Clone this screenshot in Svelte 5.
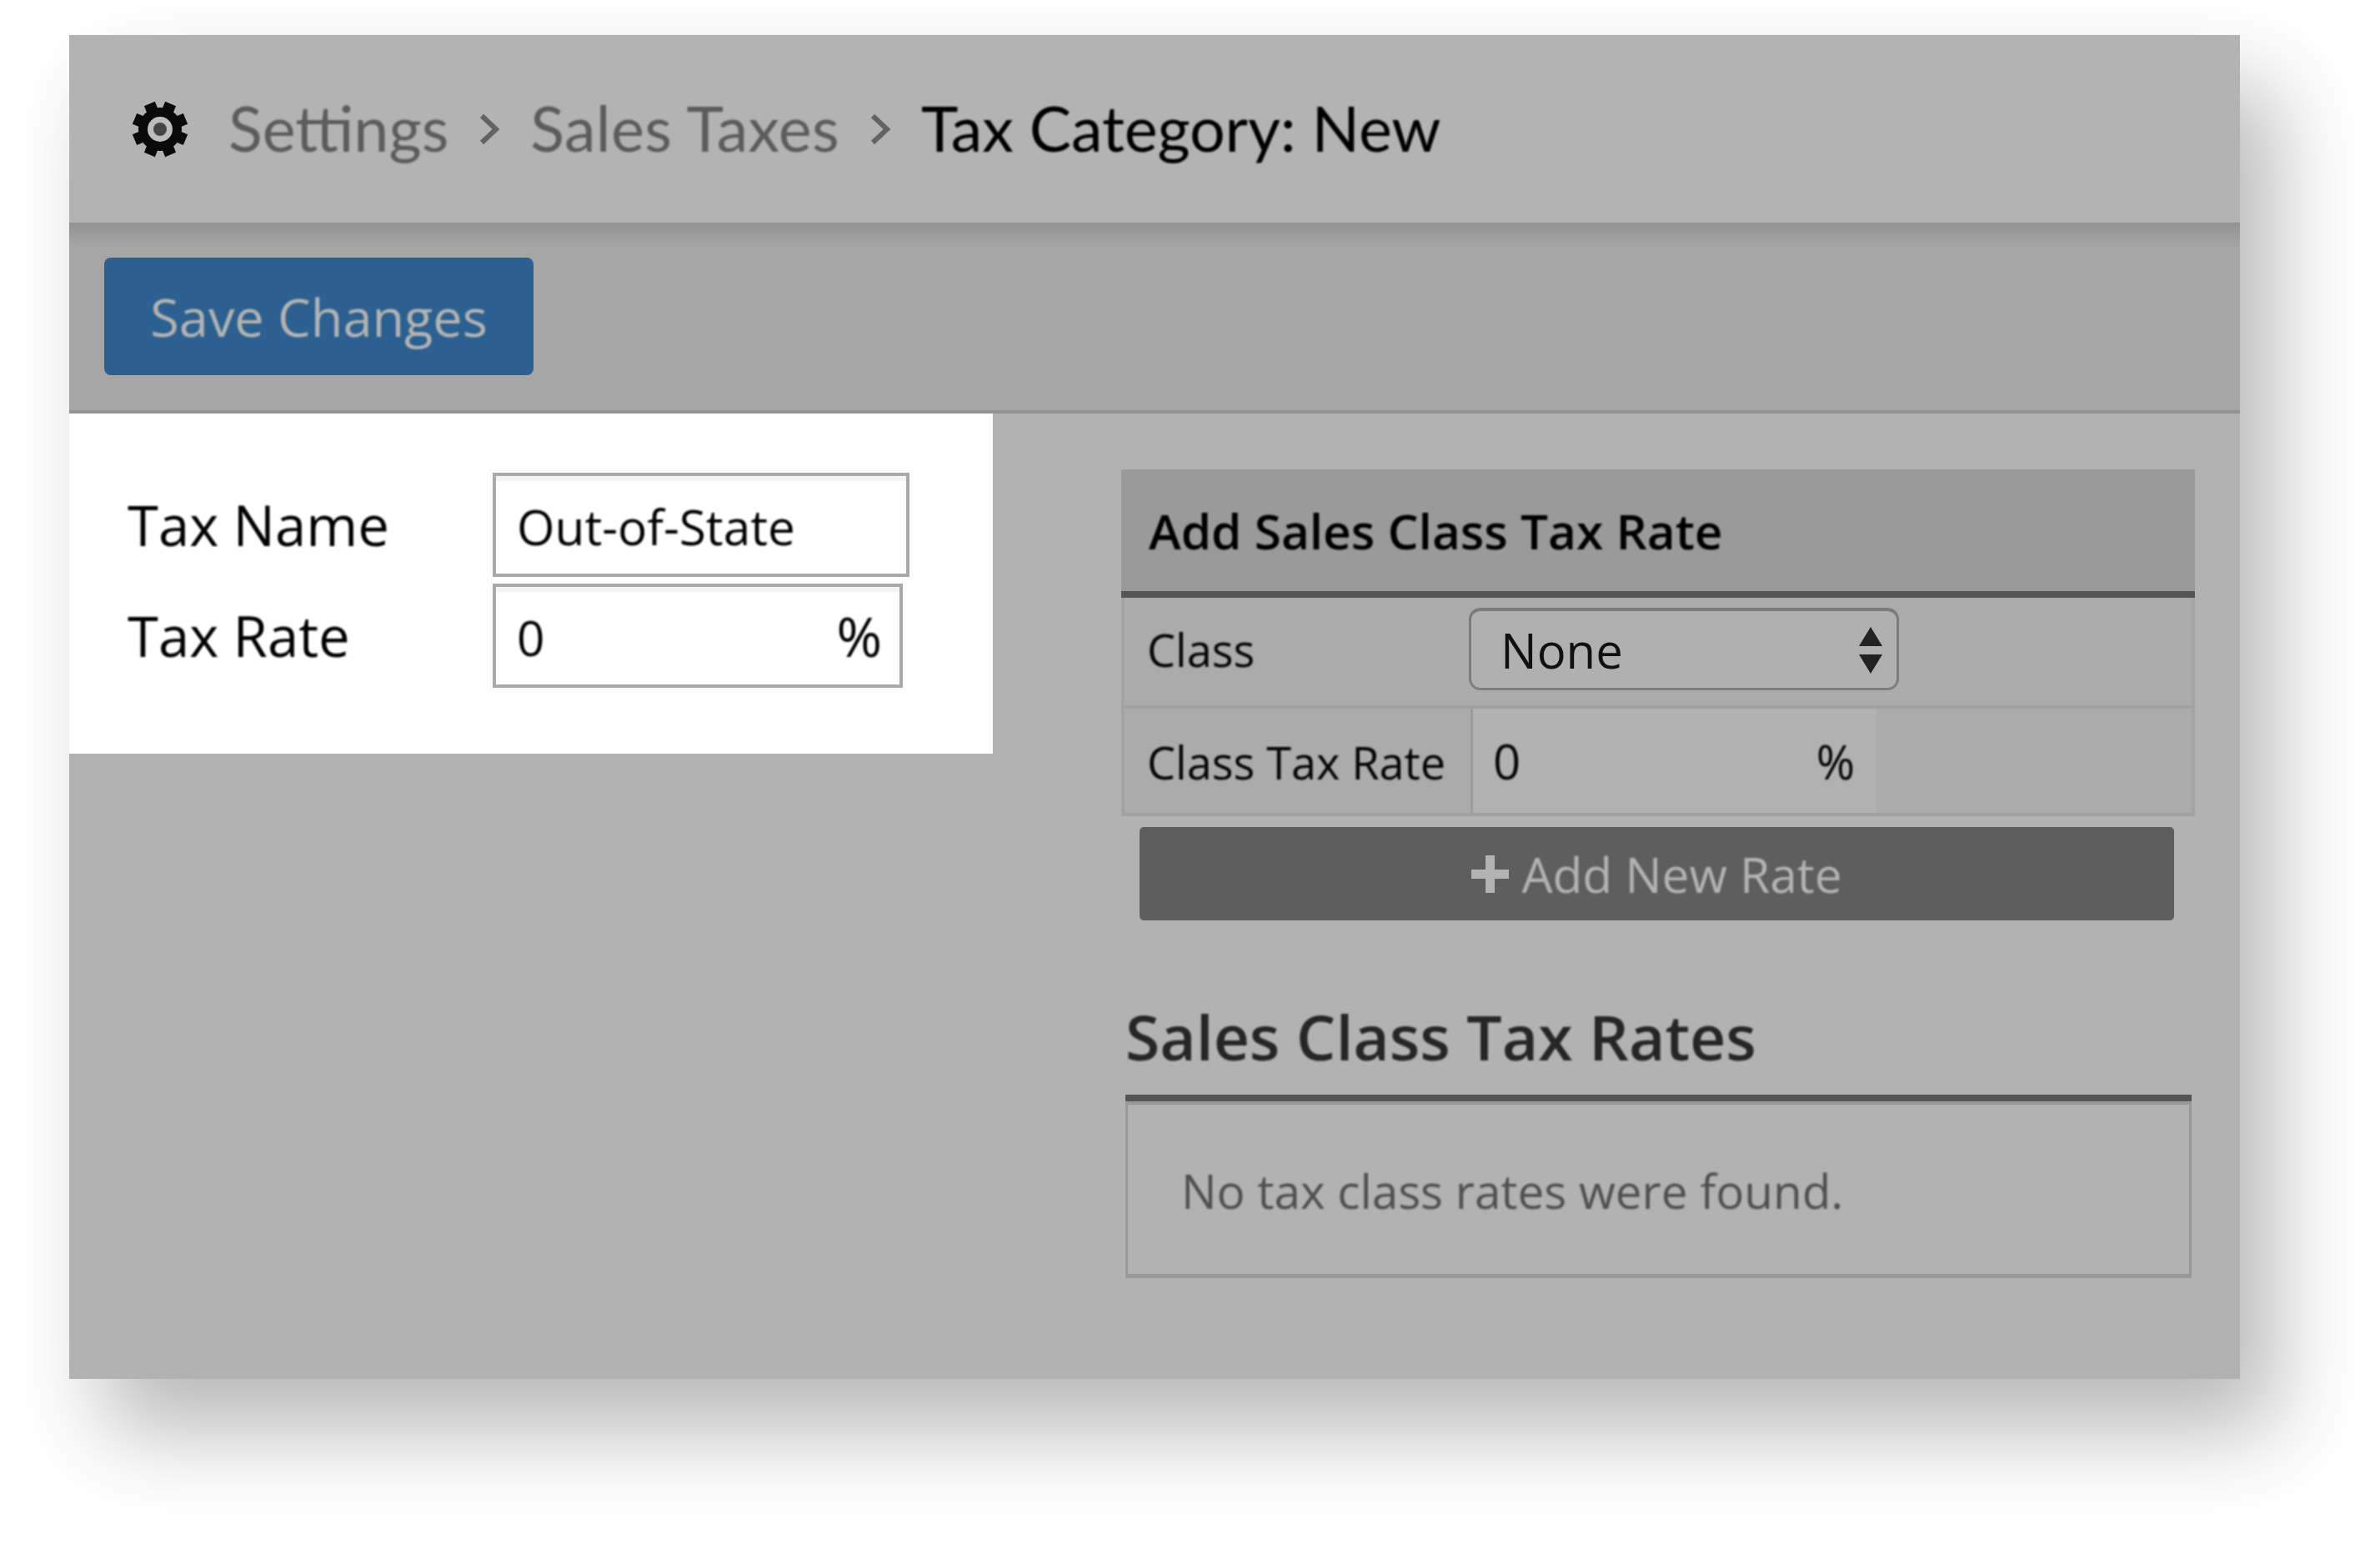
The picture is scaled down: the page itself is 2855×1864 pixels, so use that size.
<script>
  const teeth = [22.5, 67.5, 112.5, 157.5, 202.5, 247.5, 292.5, 337.5];
</script>

<div class="stage">
  <div class="window">
    <header class="crumbs">
      <svg class="gear" viewBox="0 0 68 68" aria-hidden="true">
        {#each teeth as a}
          <rect x="27" y="1" width="14" height="20" fill="#0a0a0a" transform="rotate({a} 34 34)" />
        {/each}
        <circle cx="34" cy="34" r="26" fill="#0a0a0a" />
        <circle cx="34" cy="34" r="15" fill="#bdbdbd" />
        <circle cx="34" cy="34" r="8" fill="#454545" />
      </svg>
      <span class="crumb soft">Settings</span>
      <svg class="chev" viewBox="0 0 26 38" aria-hidden="true"><path d="M4 3 L21 19 L4 35" /></svg>
      <span class="crumb wide soft">Sales Taxes</span>
      <svg class="chev" viewBox="0 0 26 38" aria-hidden="true"><path d="M4 3 L21 19 L4 35" /></svg>
      <span class="crumb current soft">Tax Category: New</span>
    </header>

    <div class="toolbar">
      <button class="save"><span class="soft">Save Changes</span></button>
    </div>

    <main class="content">
      <section class="form">
        <div class="field">
          <label class="soft" for="tax-name">Tax Name</label>
          <div class="box name"><input id="tax-name" class="soft" value="Out-of-State" /></div>
        </div>
        <div class="field">
          <label class="soft" for="tax-rate">Tax Rate</label>
          <div class="box rate">
            <input id="tax-rate" class="soft" value="0" />
            <span class="pct soft">%</span>
          </div>
        </div>
      </section>

      <section class="side">
        <h3><span class="soft">Add Sales Class Tax Rate</span></h3>
        <div class="rows">
          <div class="row one">
            <span class="cell-label soft">Class</span>
            <div class="select-wrap">
              <select><option>None</option></select>
              <svg class="arrows" viewBox="0 0 30 56" aria-hidden="true">
                <path d="M15 0 L29 23 L1 23 Z M15 56 L29 33 L1 33 Z" />
              </svg>
            </div>
          </div>
          <div class="row two">
            <span class="cell-label soft">Class Tax Rate</span>
            <div class="rate-cell">
              <input class="soft" value="0" />
              <span class="soft">%</span>
            </div>
          </div>
        </div>
        <button class="add"><span class="plus"></span><span class="soft">Add New Rate</span></button>

        <h2><span class="soft">Sales Class Tax Rates</span></h2>
        <div class="empty"><span class="soft">No tax class rates were found.</span></div>
      </section>
    </main>
  </div>
</div>

<style>
  :global(body) {
    margin: 0;
    background: #fff;
    font-family: "Open Sans", "Noto Sans", sans-serif;
  }
  .soft { filter: blur(0.9px); }
  .stage {
    width: 2855px;
    height: 1864px;
    box-sizing: border-box;
    padding: 42px 168px 210px 83px;
    overflow: hidden;
  }
  .window {
    height: 1612px;
    background: #b2b2b2;
    box-shadow: 42px 62px 100px rgba(0, 0, 0, 0.28);
    display: flex;
    flex-direction: column;
  }
  .crumbs {
    height: 225px;
    box-sizing: border-box;
    padding: 0 0 0 75px;
    display: flex;
    align-items: center;
    background: #b3b3b3;
    font-family: Lato, sans-serif;
    font-size: 75.4px;
    color: #5c5c5c;
  }
  .gear { width: 68px; height: 68px; margin-right: 48px; flex: none; }
  .crumb { line-height: 1; white-space: nowrap; margin-top: -1px; }
  .wide { letter-spacing: 0.35px; }
  .current { color: #000; letter-spacing: -0.1px; }
  .chev { width: 26px; height: 38px; margin: 0 36px; flex: none; }
  .chev path { fill: none; stroke: #636363; stroke-width: 6; }

  .toolbar {
    height: 229px;
    box-sizing: border-box;
    padding: 42px 0 0 42px;
    border-bottom: 4px solid #929292;
    background: linear-gradient(#929292, #a6a6a6 30px, #a6a6a6);
  }
  .save {
    display: block;
    width: 515px;
    height: 141px;
    border: 0;
    border-radius: 8px;
    background: #2b6090;
    color: #b3b3b3;
    font: 400 63px "Open Sans", sans-serif;
    padding: 0;
  }

  .content { flex: 1; display: flex; align-items: flex-start; }
  .form {
    width: 1108px;
    height: 408px;
    box-sizing: border-box;
    padding: 71px 0 0 70px;
    background: #fff;
    display: flex;
    flex-direction: column;
    gap: 8px;
    flex: none;
  }
  .field { display: flex; align-items: center; height: 125px; }
  label { width: 438px; flex: none; font-size: 67px; color: #000; margin-top: -2px; }
  .box {
    box-sizing: border-box;
    height: 125px;
    border: 4px solid #a9a9a9;
    box-shadow: inset 0 6px 0 #f4f4f4;
    background: #fff;
    font: 400 58.5px "Open Sans", sans-serif;
    color: #000;
    display: flex;
    align-items: center;
    padding: 2px 25px 0;
  }
  input { font: inherit; color: inherit; background: transparent; border: 0; outline: 0; min-width: 0; padding: 0; }
  .name { width: 500px; }
  .name input { width: 100%; }
  .rate { width: 492px; padding-right: 21px; }
  .rate input { flex: 1; }
  .pct { font-size: 66px; margin-top: -3px; }

  .side { width: 1288px; margin-left: 154px; padding-top: 67px; flex: none; }
  h3 {
    margin: 0;
    height: 154px;
    box-sizing: border-box;
    padding: 0 0 0 33px;
    display: flex;
    align-items: center;
    background: #9a9a9a;
    border-bottom: 8px solid #555;
    font-size: 58.5px;
    font-weight: 600;
    color: #000;
  }
  .rows {
    border-left: 4px solid #a3a3a3;
    border-right: 4px solid #a3a3a3;
    background: #ababab;
    font-size: 54px;
    color: #050505;
  }
  .row { display: flex; align-items: stretch; border-bottom: 4px solid #a0a0a0; box-sizing: border-box; }
  .row.one { height: 133px; align-items: center; padding-bottom: 6px; }
  .row.two { height: 129px; }
  .cell-label { width: 415px; box-sizing: border-box; padding-left: 27px; flex: none; display: flex; align-items: center; }
  .row.two .cell-label, .rate-cell { padding-top: 2px; }
  .select-wrap { position: relative; margin-left: -2px; }
  select {
    appearance: none;
    display: block;
    width: 516px;
    height: 99px;
    box-sizing: border-box;
    border: 3px solid #7c7c7c;
    border-top-width: 4px;
    border-radius: 14px;
    background: #b0b0b0;
    padding: 0 0 0 35px;
    font: 400 58px "Open Sans", sans-serif;
    color: #111;
  }
  .arrows { position: absolute; left: 467px; top: 23px; width: 30px; height: 56px; }
  .arrows path { fill: #222; }
  .rate-cell {
    width: 487px;
    box-sizing: border-box;
    border-left: 3px solid #9c9c9c;
    padding: 0 26px 0 24px;
    background: #b1b1b1;
    display: flex;
    align-items: center;
    font-size: 58px;
  }
  .rate-cell input { flex: 1; }
  .rate-cell span { font-size: 56px; }

  .add {
    display: flex;
    align-items: center;
    justify-content: center;
    width: 1241px;
    height: 112px;
    margin: 13px 0 0 22px;
    border: 0;
    border-radius: 5px;
    background: #5e5e5e;
    color: #b3b3b3;
    font: 400 58.6px "Open Sans", sans-serif;
    padding: 0;
  }
  .plus {
    width: 45px;
    height: 45px;
    margin-right: 15px;
    background:
      linear-gradient(#b3b3b3, #b3b3b3) center / 100% 11px no-repeat,
      linear-gradient(#b3b3b3, #b3b3b3) center / 11px 100% no-repeat;
  }
  h2 {
    margin: 0 0 0 5px;
    height: 217px;
    width: 1279px;
    box-sizing: border-box;
    border-bottom: 8px solid #555;
    display: flex;
    align-items: flex-end;
    padding-bottom: 32px;
    font-size: 75px;
    font-weight: 600;
    color: #262626;
    line-height: 1;
  }
  .empty {
    margin-left: 5px;
    width: 1279px;
    height: 212px;
    box-sizing: border-box;
    border: 3px solid #999;
    border-top-width: 4px;
    border-bottom-width: 5px;
    padding: 4px 0 0 64px;
    display: flex;
    align-items: center;
    font-size: 56.6px;
    color: #505050;
  }
</style>
